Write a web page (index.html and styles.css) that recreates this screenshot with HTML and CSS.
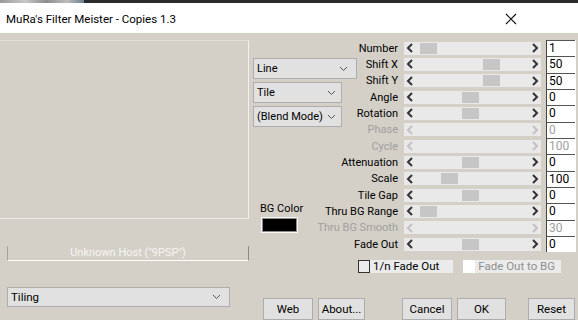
FILE: index.html
```html
<!DOCTYPE html>
<html lang="en">

<head>
    <meta charset="UTF-8">
    <title>MuRa's Filter Meister - Copies 1.3</title>
    <link rel="stylesheet" href="styles.css">
</head>

<body>
    <div class="topedge"><span class="tabs"></span></div>
    <div class="titlebar">
        <span class="title">MuRa's Filter Meister - Copies 1.3</span>
        <svg class="close" width="12" height="12" viewBox="0 0 12 12">
            <path d="M1 1L11 11M11 1L1 11" stroke="#111" stroke-width="1.1" fill="none" />
        </svg>
    </div>

    <div class="main">
        <div class="left">
            <div class="preview"></div>
            <div class="host">Unknown Host ("9PSP")</div>
        </div>

        <div class="right">
            <div class="panel">
                <div class="side">
                    <div class="selects">
                        <div class="select wide">Line<svg class="chev" width="9" height="6" viewBox="0 0 9 6"><path d="M1 1L4.5 4.5L8 1" stroke="#555" fill="none" /></svg></div>
                        <div class="select">Tile<svg class="chev" width="9" height="6" viewBox="0 0 9 6"><path d="M1 1L4.5 4.5L8 1" stroke="#555" fill="none" /></svg></div>
                        <div class="select">(Blend Mode)<svg class="chev" width="9" height="6" viewBox="0 0 9 6"><path d="M1 1L4.5 4.5L8 1" stroke="#555" fill="none" /></svg></div>
                    </div>
                    <div class="bgcolor">
                        <span>BG Color</span>
                        <div class="swatch"></div>
                    </div>
                </div>

                <div class="rows" id="rows"></div>
            </div>

            <div class="checks">
                <div class="check"><span class="box"></span><span class="lbl">1/n Fade Out</span></div>
                <div class="check off"><span class="box"></span><span class="lbl">Fade Out to BG</span></div>
            </div>
        </div>
    </div>

    <div class="footer">
        <div class="select tiling">Tiling<svg class="chev" width="9" height="6" viewBox="0 0 9 6"><path d="M1 1L4.5 4.5L8 1" stroke="#555" fill="none" /></svg></div>
        <div class="btn web">Web</div>
        <div class="btn about">About...</div>
        <div class="btn cancel">Cancel</div>
        <div class="btn ok">OK</div>
        <div class="btn reset">Reset</div>
    </div>

    <script>
        // name, value, thumb offset (px, -1 = no thumb), disabled
        var params = [
            ['Number', '1', 4, 0],
            ['Shift X', '50', 67, 0],
            ['Shift Y', '50', 67, 0],
            ['Angle', '0', 46, 0],
            ['Rotation', '0', 46, 0],
            ['Phase', '0', -1, 1],
            ['Cycle', '100', -1, 1],
            ['Attenuation', '0', 46, 0],
            ['Scale', '100', 25, 0],
            ['Tile Gap', '0', 46, 0],
            ['Thru BG Range', '0', 4, 0],
            ['Thru BG Smooth', '30', -1, 1],
            ['Fade Out', '0', 46, 0]
        ]
        var rows = document.getElementById('rows')
        var left = '<svg width="8" height="10" viewBox="0 0 8 10"><path d="M6 1L2 5L6 9" stroke-width="2" fill="none"/></svg>'
        var right = '<svg width="8" height="10" viewBox="0 0 8 10"><path d="M2 1L6 5L2 9" stroke-width="2" fill="none"/></svg>'

        for (var i = 0; i < params.length; i++) {
            var p = params[i]
            var row = document.createElement('div')
            row.className = p[3] ? 'row off' : 'row'
            var thumb = p[2] >= 0 ? '<span class="thumb" style="margin-left:' + p[2] + 'px"></span>' : ''
            row.innerHTML = '<span class="label">' + p[0] + '</span>' +
                '<div class="slider"><span class="arr">' + left + '</span><span class="trough">' + thumb + '</span><span class="arr">' + right + '</span></div>' +
                '<span class="val">' + p[1] + '</span>'
            rows.appendChild(row)
        }
    </script>
</body>

</html>
```

FILE: styles.css
```css
body {
    margin: 0;
    width: 578px;
    height: 320px;
    overflow: hidden;
    background-color: #d4d0c8;
    font-family: Roboto, "Liberation Sans", sans-serif;
    font-size: 11px;
    color: #000;
}

.topedge {
    height: 3px;
    background-color: #2b2b2b;
}

.tabs {
    display: block;
    width: 84px;
    height: 3px;
    background: linear-gradient(90deg, #9a9a9a, #c8c8c8 30%, #8c8c8c 55%, #bdbdbd 80%, #6f7f8f);
}

.titlebar {
    display: flex;
    align-items: center;
    justify-content: space-between;
    height: 30px;
    padding: 2px 0 0 6px;
    box-sizing: border-box;
    background-color: #fff;
}

.title {
    font-family: Roboto, "Noto Sans", sans-serif;
    font-size: 11.5px;
    color: #000;
}

.close {
    margin-right: 61px;
}

/* main area */

.main {
    display: flex;
    align-items: flex-start;
    padding-top: 7px;
}

.left {
    width: 250px;
}

.preview {
    width: 248px;
    height: 177px;
    border-top: 1px solid #e2dfd9;
    border-right: 1px solid #f2f1ee;
    border-bottom: 1px solid #eeece8;
}

.host {
    margin: 27px 1px 0 7px;
    height: 14px;
    border-left: 1px solid #a7a39c;
    border-bottom: 1px solid #fff;
    border-right: 1px solid #8d8a84;
    text-align: center;
    color: #f6f5f2;
    line-height: 14px;
}

.right {
    width: 328px;
}

.panel {
    display: flex;
}

.side {
    width: 57px;
    padding-left: 3px;
}

.selects {
    display: flex;
    flex-direction: column;
    gap: 3px;
    margin-top: 18px;
    position: relative;
    z-index: 1;
}

.select {
    display: flex;
    align-items: center;
    justify-content: space-between;
    width: 89px;
    height: 21px;
    box-sizing: border-box;
    padding: 0 5px 0 3px;
    background-color: #e1e1e1;
    border: 1px solid #adadad;
    font-size: 11px;
    white-space: nowrap;
}

.select.wide {
    width: 104px;
    padding-right: 8px;
}

.bgcolor {
    margin-top: 75px;
    padding-left: 7px;
    width: 50px;
}

.bgcolor span {
    display: block;
    height: 13px;
    line-height: 13px;
    font-size: 11px;
    white-space: nowrap;
}

.swatch {
    width: 33px;
    height: 12px;
    margin: 3px 0 0 2px;
    background-color: #000;
    border: 1px solid #8a8a8a;
    outline: 1px solid #f7f7f7;
}

.rows {
    display: flex;
    flex-direction: column;
}

.row {
    display: grid;
    grid-template-columns: 88px 143px 35px;
    height: 16.33px;
    align-items: center;
}

.label {
    text-align: right;
    white-space: nowrap;
}

.slider {
    display: flex;
    align-items: center;
    margin-left: 6px;
    height: 13px;
    background-color: #e9e9e9;
}

.arr {
    display: flex;
    width: 12px;
    justify-content: center;
}

.arr svg {
    stroke: #333;
}

.trough {
    display: flex;
    align-items: center;
    flex: 1;
    height: 13px;
}

.thumb {
    width: 17px;
    height: 11px;
    background-color: #c6c6c6;
}

.val {
    margin-left: 5px;
    height: 16.33px;
    box-sizing: border-box;
    padding-left: 2px;
    background-color: #fff;
    border-left: 1px solid #444;
    border-right: 1px solid #fff;
    box-shadow: inset -1px 2px 0 -1px #555;
    font-size: 12px;
    line-height: 16px;
}

.row.off .label,
.row.off .val {
    color: #a0a0a0;
}

.row.off .arr svg {
    stroke: #c2c2c2;
}

/* checkboxes */

.checks {
    display: flex;
    gap: 10px;
    margin-top: 8px;
    padding-left: 108px;
}

.check {
    display: flex;
    align-items: center;
    height: 13px;
}

.box {
    width: 10px;
    height: 11px;
    border: 1px solid #333;
    background-color: #ececec;
}

.lbl {
    height: 13px;
    line-height: 13px;
    padding: 0 14px 0 3px;
    background-color: #ebebeb;
    font-size: 11.5px;
}

.check.off .box {
    border-color: #fff;
    background-color: #fff;
}

.check.off .lbl {
    color: #8f8f8f;
    padding-right: 6px;
}

/* bottom row */

.footer {
    display: flex;
    align-items: flex-start;
    margin-top: 14px;
}

.select.tiling {
    width: 223px;
    height: 20px;
    margin-left: 7px;
    padding-right: 8px;
    font-size: 11.5px;
}

.btn {
    height: 22px;
    box-sizing: border-box;
    margin-top: 11px;
    background-color: #e1e1e1;
    border: 1px solid #adadad;
    font-size: 11.5px;
    line-height: 20px;
    text-align: center;
}

.web {
    width: 50px;
    margin-left: 33px;
}

.about {
    width: 47px;
    margin-left: 5px;
}

.cancel {
    width: 50px;
    margin-left: 37px;
}

.ok {
    width: 49px;
    margin-left: 5px;
}

.reset {
    width: 47px;
    margin-left: 22px;
}
```
